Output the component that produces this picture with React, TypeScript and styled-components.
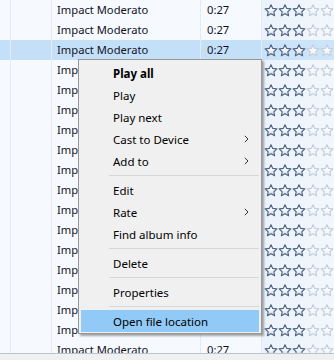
import React from 'react';
import styled, { createGlobalStyle } from 'styled-components';

const Global = createGlobalStyle`
  html, body { margin: 0; padding: 0; }
  body {
    width: 334px;
    height: 360px;
    overflow: hidden;
    background: #f0f0f0;
    font-family: "Noto Sans", "Open Sans", sans-serif;
    font-size: 11.2px;
    color: #121226;
  }
`;

const Window = styled.div`
  position: relative;
  width: 334px;
  height: 360px;
  display: flex;
  flex-direction: column;
`;

const List = styled.div`
  height: 353px;
  overflow: hidden;
  background: #f6f9fd;
  border-bottom: 1px solid #bcc3cc;
`;

const Row = styled.div<{ $selected?: boolean }>`
  display: grid;
  grid-template-columns: 11px 41px 149px 61px 1fr;
  height: 20px;
  line-height: 20px;
  background: ${p => (p.$selected ? '#c4e0f8' : 'transparent')};
`;

const Cell = styled.div<{ $pad?: number }>`
  display: flex;
  align-items: center;
  padding-left: ${p => p.$pad ?? 0}px;
  border-right: 1px solid #e2ebf6;
  white-space: nowrap;
  overflow: hidden;
`;

const Stars = styled.div`
  display: flex;
  align-items: center;
  padding-left: 2px;
  background: linear-gradient(to right, rgba(214, 229, 246, 0.35), rgba(232, 241, 251, 0.25));
`;

const Menu = styled.div`
  position: absolute;
  left: 78px;
  top: 59px;
  width: 178px;
  padding: 2px 2px 1px 2px;
  background: #f0f0f0;
  border: 1px solid #979797;
  box-shadow: 2px 2px 2px rgba(0, 0, 0, 0.35);
  font-size: 11.5px;
  color: #000;
`;

const Item = styled.div<{ $bold?: boolean; $active?: boolean }>`
  position: relative;
  display: flex;
  align-items: center;
  height: 22px;
  padding-left: 32px;
  white-space: nowrap;
  font-weight: ${p => (p.$bold ? 700 : 400)};
  background: ${p => (p.$active ? '#91c9f7' : 'transparent')};
`;

const Arrow = styled.span`
  position: absolute;
  right: 10px;
  top: 50%;
  transform: translateY(-50%);
  display: flex;
`;

const Separator = styled.div`
  height: 1px;
  margin: 3px 0 3px 28px;
  background: #d7d7d7;
`;

const Star = ({ on }: { on: boolean }) => (
  <svg width="14" height="13" viewBox="0 0 21 20">
    <defs>
      <linearGradient id={on ? 'sOn' : 'sOff'} x1="0" y1="0" x2="0" y2="1">
        <stop offset="0" stopColor={on ? '#ffffff' : '#fbfcfe'} />
        <stop offset="0.55" stopColor={on ? '#f1f4f8' : '#f6f8fb'} />
        <stop offset="1" stopColor={on ? '#b9c7d9' : '#e9eef5'} />
      </linearGradient>
    </defs>
    <path
      d="M10.5 1L13.2 6.78 19.53 7.56 14.87 11.92 16.09 18.19 10.5 15.1 4.91 18.19 6.13 11.92 1.47 7.56 7.8 6.78Z"
      fill={`url(#${on ? 'sOn' : 'sOff'})`}
      stroke={on ? '#4f6584' : '#c3cedc'}
      strokeWidth="1.7"
      strokeLinejoin="round"
    />
  </svg>
);

const Chevron = () => (
  <svg width="5" height="8" viewBox="0 0 5 8">
    <path d="M0.8 0.8L4 4 0.8 7.2" fill="none" stroke="#333" strokeWidth="1" />
  </svg>
);

const rows = Array.from({ length: 18 }, (_, i) => i);

type Entry = { label?: string; bold?: boolean; sub?: boolean; active?: boolean; sep?: boolean };

const menu: Entry[] = [
  { label: 'Play all', bold: true },
  { label: 'Play' },
  { label: 'Play next' },
  { label: 'Cast to Device', sub: true },
  { label: 'Add to', sub: true },
  { sep: true },
  { label: 'Edit' },
  { label: 'Rate', sub: true },
  { label: 'Find album info' },
  { sep: true },
  { label: 'Delete' },
  { sep: true },
  { label: 'Properties' },
  { sep: true },
  { label: 'Open file location', active: true },
];

export default function App() {
  return (
    <>
      <Global />
      <Window>
        <List>
          {rows.map(i => (
            <Row key={i} $selected={i === 2}>
              <Cell />
              <Cell />
              <Cell $pad={5}>Impact Moderato</Cell>
              <Cell $pad={6}>0:27</Cell>
              <Stars>
                {[0, 1, 2, 3, 4].map(s => (
                  <Star key={s} on={s < 3} />
                ))}
              </Stars>
            </Row>
          ))}
        </List>
        <Menu>
          {menu.map((m, i) =>
            m.sep ? (
              <Separator key={i} />
            ) : (
              <Item key={i} $bold={m.bold} $active={m.active}>
                {m.label}
                {m.sub && (
                  <Arrow>
                    <Chevron />
                  </Arrow>
                )}
              </Item>
            )
          )}
        </Menu>
      </Window>
    </>
  );
}
